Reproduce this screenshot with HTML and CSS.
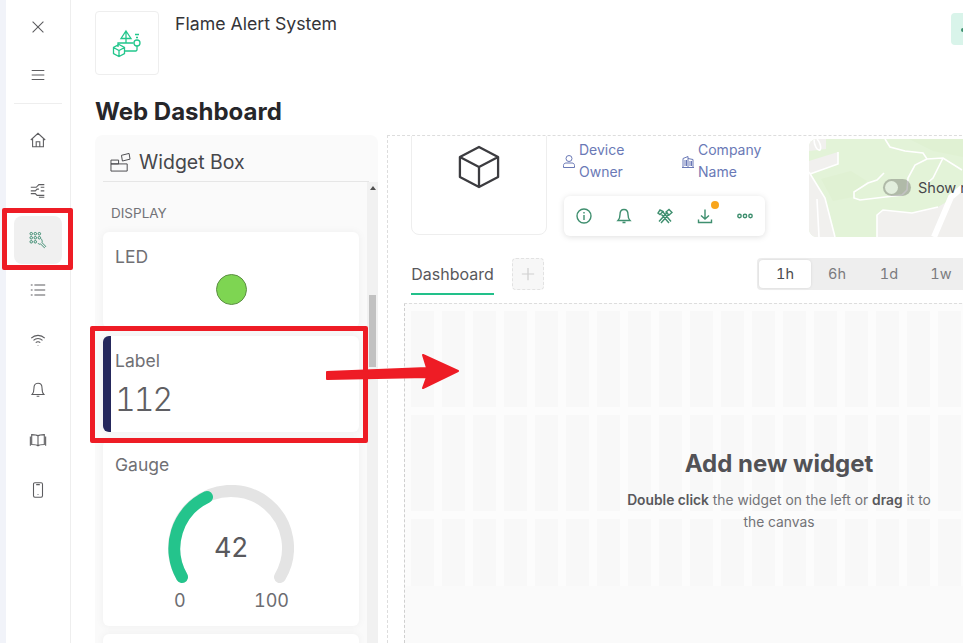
FILE: index.html
```html
<!DOCTYPE html>
<html lang="en">
<head>
    <meta charset="UTF-8">
    <meta name="viewport" content="width=device-width, initial-scale=1.0">
    <title>Web Dashboard</title>
    <link rel="stylesheet" href="styles.css">
</head>
<body>
    <div class="strip"></div>

    <nav class="sidebar">
        <div class="nav-item top">
            <svg class="nav-icon" viewBox="0 0 20 20"><path d="M4 4l12 12M16 4L4 16"/></svg>
        </div>
        <div class="nav-item top">
            <svg class="nav-icon" viewBox="0 0 20 20"><path d="M3 5h14M3 10h14M3 15h14"/></svg>
        </div>
        <div class="nav-divider"></div>
        <div class="nav-item">
            <svg class="nav-icon" viewBox="0 0 20 20"><path d="M2 10l8-7.500 8 7.500M4 9v8.500h12V9M8 17.500v-5.500h4v5.500"/></svg>
        </div>
        <div class="nav-item">
            <svg class="nav-icon" viewBox="0 0 20 20"><path d="M2 7h6l3-3h6M13 7h4M2 11h5l2-2h2M13 11h4M2 14h5l2 2h8M11 18h6" /></svg>
        </div>
        <div class="nav-item active">
            <svg class="nav-icon green" viewBox="0 0 20 20">
                <circle cx="2.500" cy="3" r="1.400"/><circle cx="7" cy="3" r="1.400"/><circle cx="11.500" cy="3" r="1.400"/>
                <circle cx="2.500" cy="7.500" r="1.400"/><circle cx="7" cy="7.500" r="1.400"/><circle cx="11.500" cy="7.500" r="1.400"/>
                <circle cx="2.500" cy="12" r="1.400"/><circle cx="7" cy="12" r="1.400"/>
                <path d="M13.500 8.500c1 1.500 1.500 3 1 4.500l4 4-1.500 1.500-4-4c-1.500.5-2.500 0-3-1"/>
            </svg>
        </div>
        <div class="nav-item">
            <svg class="nav-icon" viewBox="0 0 20 20"><path d="M6 4.500h12M6 10h12M6 15.500h12M2 4.500h2M2 10h2M2 15.500h2"/></svg>
        </div>
        <div class="nav-item">
            <svg class="nav-icon" viewBox="0 0 20 20"><path d="M2.500 8a10.500 10.500 0 0 1 15 0M5 10.500a7 7 0 0 1 10 0M7.500 13a3.500 3.500 0 0 1 5 0M10 15.500v.5"/></svg>
        </div>
        <div class="nav-item">
            <svg class="nav-icon" viewBox="0 0 20 20"><path d="M10 2.500c-3.500 0-4.500 3-4.500 5.500 0 3.500-.5 5.500-2 7h13c-1.500-1.500-2-3.500-2-7 0-2.500-1-5.500-4.500-5.500zM8.500 17h3"/></svg>
        </div>
        <div class="nav-item">
            <svg class="nav-icon" viewBox="0 0 20 20"><path d="M10 5.500C8.500 4 6 4 3 4v11c3 0 5.500 0 7 1.500 1.500-1.500 4-1.500 7-1.500V4c-3 0-5.500 0-7 1.500zM10 5.500v11M1.500 6v10.500M18.500 6v10.500"/></svg>
        </div>
        <div class="nav-item">
            <svg class="nav-icon" viewBox="0 0 20 20"><rect x="5" y="2" width="10" height="16" rx="1.500"/><path d="M8 4h4M10 14.500v.8"/></svg>
        </div>
    </nav>

    <main class="main">
        <header class="header">
            <div class="logo-box">
                <svg class="logo" viewBox="0 0 44 40">
                    <path d="M21 8l5 7.500H16zM21 8v7.500M21 15.500V20M13 24v-4h15.500M30 11.500h4M31 14.500h2"/>
                    <circle cx="32" cy="20" r="3"/>
                    <path d="M32 23v4l-1 1H20M14 21.500l5.500 3v6l-5.500 3-5.500-3v-6zM8.500 24.500l5.500 3 5.500-3M14 27.500v6"/>
                </svg>
            </div>
            <div class="project-name">Flame Alert System</div>
            <div class="status-tag"><span class="status-dot"></span></div>
        </header>

        <h1 class="page-title">Web Dashboard</h1>

        <div class="workspace">
            <section class="widget-box">
                <div class="widget-head">
                    <svg class="widget-head-icon" viewBox="0 0 22 20"><path d="M1 8h8v4H1zM1 12h17v7.500H1zM12 3l8-2 1 6-8 2z"/></svg>
                    Widget Box
                </div>
                <div class="widget-body">
                    <div class="widget-list">
                        <div class="group-title">DISPLAY</div>

                        <div class="widget-card led-card">
                            <div class="widget-name">LED</div>
                            <div class="led"></div>
                        </div>

                        <div class="widget-card label-card">
                            <div class="widget-name">Label</div>
                            <div class="label-value">112</div>
                        </div>

                        <div class="widget-card gauge-card">
                            <div class="widget-name">Gauge</div>
                            <div class="gauge">
                                <svg class="gauge-arc" viewBox="0 0 126 100">
                                    <path class="arc-back" d="M14 92A57 57 0 1 1 112 92"/>
                                    <path class="arc-value" d="M14 92A57 57 0 0 1 39 12"/>
                                </svg>
                                <div class="gauge-value">42</div>
                                <div class="gauge-scale"><span>0</span><span>100</span></div>
                            </div>
                        </div>

                        <div class="widget-card"></div>
                    </div>
                    <div class="scrollbar">
                        <div class="scroll-arrow"></div>
                        <div class="scroll-thumb"></div>
                    </div>
                </div>
            </section>

            <section class="canvas">
                <div class="device-row">
                    <div class="device-card">
                        <svg class="cube" viewBox="0 0 44 46"><path d="M22 2l20 10.500v21L22 44 2 33.500v-21zM2 12.500L22 23l20-10.500M22 23v21"/></svg>
                    </div>
                    <div class="device-info">
                        <div class="meta-row">
                            <div class="meta">
                                <svg class="meta-icon" viewBox="0 0 14 14"><circle cx="7" cy="4" r="3"/><path d="M1.500 13v-2c0-1.500 1-2.500 2.500-2.500h6c1.500 0 2.500 1 2.500 2.500v2z"/></svg>
                                <span>Device<br>Owner</span>
                            </div>
                            <div class="meta">
                                <svg class="meta-icon" viewBox="0 0 14 14"><path d="M2 13V4l5-2v11M7 4l5 1v8M1 13h12M4 5.500v6M5.500 5.500v6M9 6.500v5M10.500 6.500v5"/></svg>
                                <span>Company<br>Name</span>
                            </div>
                        </div>
                        <div class="action-bar">
                            <svg class="action-icon" viewBox="0 0 16 16"><circle cx="8" cy="8" r="7"/><path d="M8 7v5M8 4v1.500"/></svg>
                            <svg class="action-icon" viewBox="0 0 16 16"><path d="M8 1.500c-3 0-4 2.500-4 5 0 3-.5 4.500-2 6h12c-1.500-1.500-2-3-2-6 0-2.500-1-5-4-5zM6.500 14.500h3"/></svg>
                            <svg class="action-icon" viewBox="0 0 16 16"><path d="M2 13.500L10.500 4M4 15L12 6M6 3.500L3 2 1 5l2 1.500zM14 13.500L6 4M12 15L4.500 6.500M9 4l3-2.500 3 3-3 2.500z"/></svg>
                            <div class="download">
                                <svg class="action-icon" viewBox="0 0 16 16"><path d="M8 1.500v9.500M4 7.500L8 11l4-3.500M1.500 11.500v3h13v-3"/></svg>
                                <span class="update-dot"></span>
                            </div>
                            <svg class="action-icon" viewBox="0 0 16 16"><circle cx="2.500" cy="8" r="1.700"/><circle cx="8" cy="8" r="1.700"/><circle cx="13.500" cy="8" r="1.700"/></svg>
                        </div>
                    </div>
                    <div class="map">
                        <svg class="map-art" viewBox="0 0 154 98" preserveAspectRatio="none">
                            <path class="land" d="M0 0h17v10L0 12zM0 22l29-9v12L0 35zM0 33l16 26 10 39H0zM68 98V76l6-5 29 3 26-6 25-15v45z"/>
                            <path class="patch" d="M12 40l30-8 16 10-14 16-20 4zM100 0h54v18l-30-6z"/>
                            <path class="road" d="M76 0l5 8 15 4 18 2 4 6 16-1 19 12M118 20l-12 6-7 13-1 12-5 5-42 5-6-2v-6l14-9 9-3 7-7M134 19l-10 20-8 7M0 33l16 26 10 39M1 35l28-10V13M5 0c0 6 3 12 6 11 2-3-1-9-3-11M68 98V76l6-5 29 3 26-6M8 60l2 38"/>
                            <path class="road-wide" d="M125 98l17-40 12-10"/>
                        </svg>
                        <div class="map-toggle">
                            <span class="toggle"><span class="toggle-knob"></span></span>
                            <span class="toggle-text">Show map</span>
                        </div>
                    </div>
                </div>

                <div class="tab-row">
                    <div class="tab">Dashboard</div>
                    <div class="tab-add">
                        <svg class="plus" viewBox="0 0 16 16"><path d="M8 1v14M1 8h14"/></svg>
                    </div>
                    <div class="range">
                        <span class="range-item selected">1h</span>
                        <span class="range-item">6h</span>
                        <span class="range-item">1d</span>
                        <span class="range-item">1w</span>
                    </div>
                </div>

                <div class="board">
                    <div class="grid">
                        <div class="grid-row"></div>
                        <div class="grid-row"></div>
                        <div class="grid-row last"></div>
                    </div>
                    <div class="empty-note">
                        <h2>Add new widget</h2>
                        <p><b>Double click</b> the widget on the left or <b>drag</b> it to<br>the canvas</p>
                    </div>
                </div>
            </section>
        </div>
    </main>

    <!-- annotations drawn on top of the screenshot -->
    <div class="mark mark-nav"></div>
    <div class="mark mark-label"></div>
    <svg class="mark-arrow" viewBox="0 0 140 40">
        <path d="M3 21l100-4-4-13 35 16-35 17 4-11-100 2z"/>
    </svg>
</body>
</html>
```

FILE: styles.css
```css
* {
    box-sizing: border-box;
}
html, body {
    height: 100%;
    overflow: hidden;
}
body {
    margin: 0;
    display: flex;
    font-family: Inter, "Liberation Sans", sans-serif;
    background-color: #ffffff;
    color: #58585c;
}
.strip {
    width: 6px;
    background-color: #f1f3f9;
}

/* sidebar */
.sidebar {
    width: 65px;
    flex: none;
    border-right: 1px solid #eeeeee;
    display: flex;
    flex-direction: column;
    align-items: center;
    padding-top: 3px;
}
.nav-item {
    width: 48px;
    height: 48px;
    flex: none;
    margin-bottom: 2px;
    display: flex;
    align-items: center;
    justify-content: center;
    border-radius: 8px;
}
.nav-item.top {
    margin-bottom: 0;
}
.nav-item.active {
    background-color: #f0f0f0;
}
.nav-icon {
    width: 18px;
    height: 18px;
    fill: none;
    stroke: #5d5d60;
    stroke-width: 1.200;
}
.nav-icon.green {
    stroke: #2f8366;
    stroke-width: 1;
}
.nav-divider {
    width: 48px;
    height: 1px;
    margin: 4px 0 12px;
    background-color: #eeeeee;
}

/* header */
.main {
    flex: none;
    width: 892px;
    padding: 11px 0 0 24px;
    overflow: hidden;
}
.header {
    display: flex;
    width: 896px;
}
.logo-box {
    width: 64px;
    height: 64px;
    border: 1px solid #eeeeee;
    border-radius: 4px;
    display: flex;
    align-items: center;
    justify-content: center;
}
.logo {
    width: 44px;
    height: 40px;
    fill: none;
    stroke: #22c68c;
    stroke-width: 1.300;
}
.project-name {
    margin-left: 16px;
    font-size: 17.700px;
    line-height: 26px;
    color: #343438;
}
.status-tag {
    margin: 2px 0 0 auto;
    width: 40px;
    height: 32px;
    padding: 15px 0 0 10px;
    border-radius: 4px;
    background-color: #d9f4ea;
}
.status-dot {
    display: block;
    width: 4px;
    height: 4px;
    border-radius: 50%;
    background-color: #3f8f6f;
}
.page-title {
    margin: 22px 0 9px;
    font-size: 24px;
    line-height: 29px;
    font-weight: 700;
    color: #26262a;
}

/* widget box */
.workspace {
    display: flex;
    gap: 9px;
    width: 900px;
    height: 508px;
}
.widget-box {
    width: 283px;
    flex: none;
    display: flex;
    flex-direction: column;
    background-color: #fafafa;
    border-radius: 8px 8px 0 0;
    padding-left: 8px;
    overflow: hidden;
}
.widget-head {
    height: 47px;
    margin-right: 9px;
    flex: none;
    display: flex;
    align-items: center;
    gap: 8px;
    padding: 7px 0 0 7px;
    border-bottom: 1px solid #e6e6e6;
    font-size: 19.500px;
    color: #47474b;
}
.widget-head-icon {
    width: 21px;
    height: 20px;
    fill: none;
    stroke: #47474b;
    stroke-width: 1;
}
.widget-body {
    flex: 1;
    display: flex;
    min-height: 0;
}
.widget-list {
    width: 264px;
    flex: none;
    padding-right: 8px;
}
.group-title {
    padding: 22px 0 0 8px;
    height: 50px;
    font-size: 13.500px;
    line-height: 18px;
    color: #737377;
}
.widget-card {
    background-color: #ffffff;
    border-radius: 6px;
    padding: 14px 12px 0;
    margin-bottom: 8px;
    box-shadow: 0 0 8px rgba(0, 0, 0, 0.05);
}
.widget-name {
    font-size: 17.500px;
    line-height: 22px;
    color: #707074;
}
.led-card {
    height: 96px;
}
.led {
    width: 31px;
    height: 31px;
    margin: 6px auto 0;
    border-radius: 50%;
    background-color: #7ed552;
    border: 1px solid #5d8f45;
}
.label-card {
    height: 96px;
    border-left: 8px solid #25285c;
    padding-left: 4px;
}
.label-value {
    margin-top: 10px;
    font-size: 32px;
    line-height: 36px;
    font-weight: 300;
    font-feature-settings: "tnum";
    letter-spacing: -2px;
    color: #5f5f63;
}
.gauge-card {
    height: 186px;
}
.gauge {
    position: relative;
    width: 126px;
    margin: 9px 0 0 53px;
}
.gauge-arc {
    display: block;
    width: 126px;
    height: 100px;
    fill: none;
    stroke-width: 12;
    stroke-linecap: round;
}
.arc-back {
    stroke: #e4e4e4;
}
.arc-value {
    stroke: #24c48c;
}
.gauge-value {
    position: absolute;
    left: 0;
    right: 0;
    top: 46px;
    text-align: center;
    font-size: 27px;
    line-height: 34px;
    color: #59595d;
}
.gauge-scale {
    display: flex;
    justify-content: space-between;
    margin: 5px 5px 0 6px;
    font-size: 18px;
    line-height: 22px;
    font-feature-settings: "tnum";
    color: #6c6c70;
}
.scrollbar {
    width: 11px;
    flex: none;
    background-color: #f1f1f1;
    padding: 4px 2px 0;
}
.scroll-arrow {
    width: 0;
    height: 0;
    margin: 0 auto 105px;
    border-left: 3px solid transparent;
    border-right: 3px solid transparent;
    border-bottom: 4px solid #505050;
}
.scroll-thumb {
    height: 72px;
    background-color: #c1c1c1;
}

/* canvas */
.canvas {
    width: 590px;
    flex: none;
    border-top: 1px dashed #dddddd;
    border-left: 1px dashed #dddddd;
    overflow: hidden;
}
.device-row {
    display: flex;
    margin: -26px 0 0 23px;
}
.device-card {
    width: 136px;
    height: 125px;
    flex: none;
    border: 1px solid #eeeeee;
    border-radius: 8px;
    display: flex;
    align-items: flex-start;
    justify-content: center;
    padding-top: 34px;
}
.cube {
    width: 42px;
    height: 44px;
    fill: none;
    stroke: #3c3c40;
    stroke-width: 2.400;
    stroke-linejoin: round;
}
.device-info {
    width: 262px;
    flex: none;
    padding: 28px 0 0 15px;
}
.meta-row {
    display: flex;
    height: 45px;
}
.meta {
    display: flex;
    align-items: center;
    gap: 3px;
    width: 119px;
    flex: none;
    font-size: 14px;
    line-height: 22px;
    color: #6a79b6;
}
.meta-icon {
    width: 14px;
    height: 15px;
    flex: none;
    fill: none;
    stroke: #6a79b6;
    stroke-width: 1;
    margin-top: 1px;
}
.action-bar {
    margin: 13px 0 0 2px;
    width: 201px;
    height: 40px;
    display: flex;
    align-items: center;
    justify-content: space-between;
    padding: 0 12px;
    background-color: #ffffff;
    border-radius: 6px;
    box-shadow: 0 1px 6px rgba(0, 0, 0, 0.13);
}
.action-icon {
    display: block;
    width: 16px;
    height: 16px;
    fill: none;
    stroke: #3f8f6f;
    stroke-width: 1.400;
}
.download {
    position: relative;
}
.update-dot {
    position: absolute;
    top: -7px;
    right: -6px;
    width: 8px;
    height: 8px;
    border-radius: 50%;
    background-color: #f8a51c;
}
.map {
    position: relative;
    width: 200px;
    height: 98px;
    flex: none;
    margin-top: 29px;
    background-color: #e3f3d8;
    border-radius: 8px;
    overflow: hidden;
}
.map-art {
    display: block;
    width: 154px;
    height: 98px;
}
.land {
    fill: #f1f0ee;
}
.patch {
    fill: #e0f1d3;
}
.road {
    fill: none;
    stroke: #ffffff;
    stroke-width: 1.600;
}
.road-wide {
    fill: none;
    stroke: #ffffff;
    stroke-width: 6;
}
.map-toggle {
    position: absolute;
    left: 74px;
    top: 40px;
    display: flex;
    align-items: center;
    gap: 7px;
    white-space: nowrap;
}
.toggle {
    width: 28px;
    height: 17px;
    padding: 2px;
    border-radius: 9px;
    background-color: rgba(80, 80, 80, 0.35);
}
.toggle-knob {
    display: block;
    width: 13px;
    height: 13px;
    border-radius: 50%;
    background-color: #e2eedd;
}
.toggle-text {
    font-size: 14.500px;
    color: #47474b;
}

/* tabs */
.tab-row {
    display: flex;
    align-items: flex-start;
    margin: 21px 0 0 23px;
    height: 45px;
}
.tab {
    width: 83px;
    height: 37px;
    flex: none;
    padding-top: 3px;
    border-bottom: 2px solid #22c08a;
    font-size: 16px;
    line-height: 26px;
    color: #58585c;
    text-align: center;
}
.tab-add {
    width: 32px;
    height: 32px;
    flex: none;
    margin-left: 18px;
    display: flex;
    align-items: center;
    justify-content: center;
    background-color: #f7f7f7;
    border: 1px dashed #e2e2e2;
    border-radius: 4px;
}
.plus {
    width: 14px;
    height: 14px;
    stroke: #cfcfcf;
    stroke-width: 1.400;
}
.range {
    display: flex;
    width: 240px;
    height: 32px;
    flex: none;
    margin-left: 213px;
    padding: 2px;
    background-color: #eeeeee;
    border-radius: 4px;
}
.range-item {
    width: 52px;
    flex: none;
    font-size: 14.500px;
    line-height: 28px;
    text-align: center;
    font-feature-settings: "tnum";
    color: #7b7b7f;
}
.range-item.selected {
    background-color: #ffffff;
    border-radius: 4px;
    color: #4c4c50;
    box-shadow: 0 0 3px rgba(0, 0, 0, 0.1);
}

/* empty board */
.board {
    position: relative;
    height: 340px;
    margin-left: 16px;
    background-color: #fafafa;
    border-top: 1px dashed #dddddd;
    border-left: 1px dashed #cfcfcf;
}
.grid {
    height: 282px;
    padding: 7px 0 0 6px;
    background-color: #fcfcfc;
}
.grid-row {
    height: 96px;
    margin-bottom: 8px;
    background-image: repeating-linear-gradient(90deg, #f8f8f8 0 23px, transparent 23px 31px);
}
.grid-row.last {
    height: 67px;
    margin-bottom: 0;
}
.empty-note {
    position: absolute;
    left: 217px;
    top: 145px;
    width: 314px;
    text-align: center;
}
.empty-note h2 {
    margin: 0;
    font-size: 24px;
    line-height: 30px;
    font-weight: 700;
    color: #525256;
}
.empty-note p {
    margin: 10px 0 0;
    font-size: 13.800px;
    line-height: 22px;
    color: #737377;
}
.empty-note b {
    font-weight: 600;
    color: #58585c;
}

/* annotations */
.mark {
    position: absolute;
    border: 5px solid #ee1c25;
    border-radius: 2px;
}
.mark-nav {
    left: 2px;
    top: 208px;
    width: 71px;
    height: 62px;
}
.mark-label {
    left: 90px;
    top: 326px;
    width: 278px;
    height: 117px;
}
.mark-arrow {
    position: absolute;
    left: 324px;
    top: 351px;
    width: 140px;
    height: 40px;
    fill: #ee1c25;
    stroke: #ee1c25;
    stroke-width: 2;
    stroke-linejoin: round;
}
```
